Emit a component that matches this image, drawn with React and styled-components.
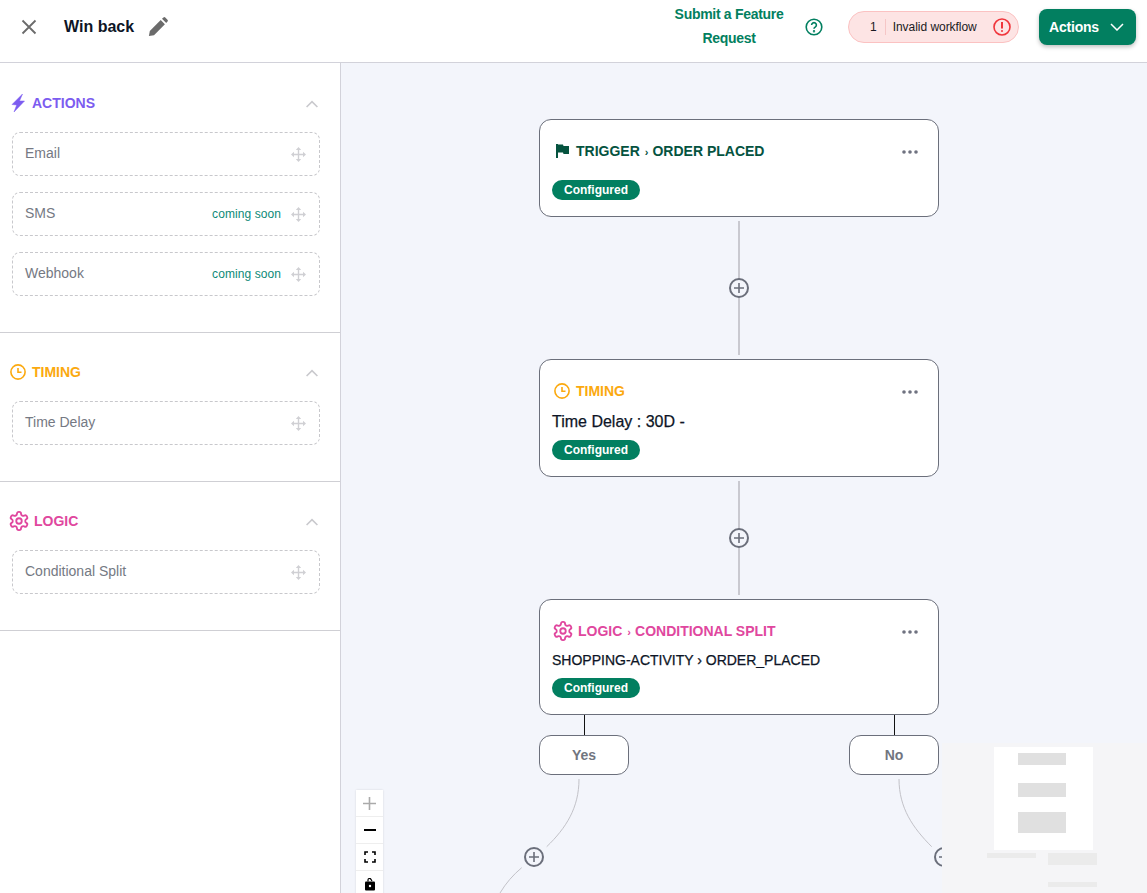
import React from "react";
import styled, { createGlobalStyle } from "styled-components";

const GREEN = "#027f60";

const Global = createGlobalStyle`
  html, body { margin: 0; padding: 0; height: 100%; overflow: hidden; background: #fff; }
  body { font-family: "Liberation Sans", Arial, sans-serif; }
  #root { height: 100%; }
  * { box-sizing: border-box; }
`;

const Page = styled.div`
  width: 1147px; height: 893px; display: flex; flex-direction: column; overflow: hidden;
`;
const Header = styled.header`
  height: 63px; flex: none; display: flex; align-items: center; background: #fff;
  border-bottom: 1px solid #d2d2da; padding: 0 11px 8px 20px;
`;
const CloseBtn = styled.button`
  width: 18px; height: 18px; padding: 0; border: 0; background: none; display: flex; color: #6b6b6b; margin-right: 26px;
`;
const Title = styled.h1`
  margin: 0 14px 0 0; font-size: 16px; font-weight: 700; color: #0d1526; line-height: 20px;
`;
const PencilWrap = styled.span` display: flex; color: #6b6b6b; `;
const Spacer = styled.div` flex: 1; `;
const FeatureLink = styled.a`
  width: 116px; text-align: center; font-size: 14px; font-weight: 700; line-height: 24px; color: ${GREEN}; letter-spacing: -.3px; margin: -2px 1px 0 -1px;
`;
const HelpIcon = styled.span` display: flex; margin: 0 25px 0 17px; color: ${GREEN}; `;
const ErrorPill = styled.div`
  width: 171px; height: 32px; display: flex; align-items: center; border-radius: 16px; background: #fde4e4; border: 1px solid #fbc2c2;
  font-size: 12px; color: #1a1a22; padding: 0 7px 0 21px; margin-right: 20px;
`;
const ErrorCount = styled.span` padding-right: 8px; border-right: 1px solid #f6c6c6; margin-right: 7px; line-height: 16px; `;
const ErrorText = styled.span` flex: 1; white-space: nowrap; letter-spacing: -.04px; `;
const ActionsBtn = styled.button`
  width: 97px; height: 36px; border: 0; border-radius: 8px; background: ${GREEN}; color: #fff; font: 700 14px "Liberation Sans", Arial, sans-serif;
  letter-spacing: -.2px; display: flex; align-items: center; justify-content: space-between; padding: 0 12px 0 10px; box-shadow: 0 2px 4px rgba(0,0,0,.25);
`;
const Body = styled.div` flex: 1; display: flex; min-height: 0; `;
const Sidebar = styled.aside`
  width: 341px; flex: none; background: #fff; border-right: 1px solid #d2d2da;
`;
const Section = styled.section`
  padding: 27px 22px 36px 10px; border-bottom: 1px solid #cfcfd4;
  &:first-child { padding-top: 28px; }
`;
const SectionHead = styled.div`
  height: 24px; display: flex; align-items: center; gap: ${p => p.$gap}px; color: ${p => p.$color}; font-size: 14px; font-weight: 700;
  margin-bottom: 17px;
`;
const SectionChevron = styled.span` margin-left: auto; display: flex; color: #c9c9cd; margin-top: 2px; `;
const ItemList = styled.div` display: flex; flex-direction: column; gap: 16px; margin: 0 -2px 0 2px; `;
const Item = styled.div`
  height: 44px; display: flex; align-items: center; border: 1px dashed #c8c8cc; border-radius: 8px; padding: 0 13px 3px 12px;
  font-size: 14px; color: #757983;
`;
const Soon = styled.span` margin-left: auto; font-size: 12px; color: #0d8a78; letter-spacing: .08px; margin-right: 10px; margin-top: 3px; `;
const Handle = styled.span` display: flex; color: #d0d0d4; margin-top: 3px; margin-left: ${p => (p.$auto ? "auto" : "0")}; `;
const Canvas = styled.main`
  position: relative; flex: 1; background: #f3f5fb; overflow: hidden;
`;
const Edges = styled.svg`
  position: absolute; left: 0; top: 0; width: 806px; height: 830px; pointer-events: none;
`;
const Node = styled.div`
  position: absolute; left: 198px; width: 400px; top: ${p => p.$top}px; height: ${p => p.$h}px; background: #fff;
  border: 1px solid #6b6f7b; border-radius: 12px; padding: 0 12px;
`;
const NodeHead = styled.div`
  position: absolute; left: ${p => p.$left ?? 14}px; top: 21px; height: 20px; display: flex; align-items: center; gap: ${p => p.$gap ?? 6}px;
  color: ${p => p.$color}; font-size: 14px; font-weight: 700; white-space: nowrap;
`;
const Sep = styled.span` font-size: 11px; margin: 0 4px 0 5px; `;
const Dots = styled.span` position: absolute; right: 20px; top: 30px; display: flex; color: #6f7280; `;
const NodeText = styled.div`
  position: absolute; left: 12px; top: ${p => p.$top}px; font-size: ${p => p.$size}px; font-weight: 500; color: #0d1526; line-height: 20px; white-space: nowrap;
  -webkit-text-stroke: .25px #0d1526;
`;
const Badge = styled.span`
  position: absolute; left: 12px; bottom: 16px; height: 20px; width: 88px; border-radius: 10px; background: ${GREEN}; color: #fff;
  font-size: 12px; font-weight: 700; display: flex; align-items: center; justify-content: center;
`;
const Branch = styled.div`
  position: absolute; top: 672px; left: ${p => p.$left}px; width: 90px; height: 40px; background: #fff; border: 1px solid #6b6f7b; border-radius: 12px;
  display: flex; align-items: center; justify-content: center; font-size: 14px; font-weight: 700; color: #71757f;
`;
const ZoomBar = styled.div`
  position: absolute; left: 15px; top: 727px; width: 27px; display: flex; flex-direction: column; background: #fff; box-shadow: 0 0 2px rgba(0,0,0,.12);
`;
const ZoomBtn = styled.div`
  width: 27px; height: 27px; flex: none; display: flex; align-items: center; justify-content: center; border-bottom: 1px solid #eee; color: ${p => p.$c || "#000"};
`;
const Minimap = styled.div`
  position: absolute; left: 601px; top: 680px; width: 205px; height: 150px; background: #f5f5f7;
`;
const MiniSheet = styled.div`
  position: absolute; left: 52px; top: 4px; width: 99px; height: 103px; background: #fff;
`;
const MiniBlock = styled.div`
  position: absolute; left: ${p => p.$x}px; top: ${p => p.$y}px; width: ${p => p.$w}px; height: ${p => p.$h}px; background: ${p => p.$c};
`;

const FlashIcon = () => (
  <svg width="15" height="18" viewBox="-2 0 15 18"><path d="M10.500 0 0 10.500l4.700.5L2 18 12.500 7 7.500 7z" fill="currentColor" stroke="currentColor" strokeWidth=".5" strokeLinejoin="round" /></svg>
);
const ClockIcon = () => (
  <svg width="16" height="16" viewBox="0 0 16 16" fill="none" stroke="currentColor" strokeWidth="1.600"><circle cx="8" cy="8" r="7.100" /><path d="M8 4v4.300h3.500" /></svg>
);
const GearIcon = () => (
  <svg width="22" height="22" viewBox="0 0 24 24" fill="none" stroke="currentColor" strokeWidth="2" strokeLinecap="round" strokeLinejoin="round" style={{ marginLeft: -2 }}>
    <path d="M12.220 2h-.44a2 2 0 0 0-2 2v.18a2 2 0 0 1-1 1.730l-.43.25a2 2 0 0 1-2 0l-.15-.08a2 2 0 0 0-2.730.73l-.22.38a2 2 0 0 0 .73 2.730l.15.1a2 2 0 0 1 1 1.720v.51a2 2 0 0 1-1 1.740l-.15.09a2 2 0 0 0-.73 2.730l.22.38a2 2 0 0 0 2.730.73l.15-.08a2 2 0 0 1 2 0l.43.25a2 2 0 0 1 1 1.730V20a2 2 0 0 0 2 2h.44a2 2 0 0 0 2-2v-.18a2 2 0 0 1 1-1.730l.43-.25a2 2 0 0 1 2 0l.15.08a2 2 0 0 0 2.730-.73l.22-.39a2 2 0 0 0-.73-2.730l-.15-.08a2 2 0 0 1-1-1.740v-.5a2 2 0 0 1 1-1.740l.15-.09a2 2 0 0 0 .73-2.730l-.22-.38a2 2 0 0 0-2.730-.73l-.15.08a2 2 0 0 1-2 0l-.43-.25a2 2 0 0 1-1-1.730V4a2 2 0 0 0-2-2z" />
    <circle cx="12" cy="12" r="3" />
  </svg>
);
const MoveIcon = () => (
  <svg width="15" height="15" viewBox="0 0 15 15" fill="currentColor">
    <path d="M6.800 2.500h1.400v10H6.800zM2.500 6.800h10v1.400h-10z" /><path d="M7.500 0 10.200 3H4.800zM7.500 15 4.800 12h5.400zM0 7.500 3 4.800v5.400zM15 7.500 12 10.200V4.800z" />
  </svg>
);
const Chevron = () => (
  <svg width="12" height="8" viewBox="0 0 12 8" fill="none" stroke="currentColor" strokeWidth="1.600"><path d="M.6 7l5.400-5.400L11.400 7" /></svg>
);
const DotsIcon = () => (
  <svg width="16" height="4" viewBox="0 0 16 4" fill="currentColor"><circle cx="2" cy="2" r="1.800" /><circle cx="8" cy="2" r="1.800" /><circle cx="14" cy="2" r="1.800" /></svg>
);
const AddCircle = ({ x, y }) => (
  <g transform={`translate(${x} ${y})`} fill="none" stroke="#6b6f7b">
    <circle r="9" strokeWidth="2" fill="#f3f5fb" />
    <path d="M-5 0h10M0-5v10" strokeWidth="1.600" />
  </g>
);

const Row = ({ label, soon }) => (
  <Item>
    {label}
    {soon && <Soon>coming soon</Soon>}
    <Handle $auto={!soon}><MoveIcon /></Handle>
  </Item>
);

const SidebarSection = ({ color, icon, gap, title, items }) => (
  <Section>
    <SectionHead $color={color} $gap={gap}>
      {icon}
      {title}
      <SectionChevron><Chevron /></SectionChevron>
    </SectionHead>
    <ItemList>
      {items.map(i => <Row key={i.label} {...i} />)}
    </ItemList>
  </Section>
);

export default function App() {
  return (
    <Page>
      <Global />
      <Header>
        <CloseBtn aria-label="Close">
          <svg width="18" height="18" viewBox="0 0 18 18" stroke="currentColor" strokeWidth="1.800"><path d="M2.500 2.500l13 13M15.500 2.500l-13 13" /></svg>
        </CloseBtn>
        <Title>Win back</Title>
        <PencilWrap>
          <svg width="20" height="20" viewBox="0 0 22 22" fill="currentColor"><path d="M1 21l1-5.600L14 3.400l4.600 4.600-12 12zM15.400 2l1.600-1.400a1.400 1.400 0 0 1 2 0l2.400 2.400a1.400 1.400 0 0 1 0 2L20 6.600z" /></svg>
        </PencilWrap>
        <Spacer />
        <FeatureLink>Submit a Feature Request</FeatureLink>
        <HelpIcon>
          <svg width="18" height="18" viewBox="0 0 18 18" fill="none" stroke="currentColor" strokeWidth="1.600"><circle cx="9" cy="9" r="7.800" /><path d="M6.600 7a2.400 2.400 0 1 1 3.600 2.100c-.8.5-1.200.9-1.200 1.700" /><circle cx="9" cy="13.200" r=".4" /></svg>
        </HelpIcon>
        <ErrorPill>
          <ErrorCount>1</ErrorCount>
          <ErrorText>Invalid workflow</ErrorText>
          <svg width="18" height="18" viewBox="0 0 18 18" fill="none" stroke="#f0353b" strokeWidth="1.600"><circle cx="9" cy="9" r="8" /><path d="M9 4v6.400M9 12.200v1.600" strokeWidth="2" /></svg>
        </ErrorPill>
        <ActionsBtn>
          Actions
          <svg width="14" height="8" viewBox="0 0 14 8" fill="none" stroke="#fff" strokeWidth="1.500"><path d="M1 1l6 6 6-6" /></svg>
        </ActionsBtn>
      </Header>
      <Body>
        <Sidebar>
          <SidebarSection color="#7c5cf0" gap={7} icon={<FlashIcon />} title="ACTIONS"
            items={[{ label: "Email" }, { label: "SMS", soon: true }, { label: "Webhook", soon: true }]} />
          <SidebarSection color="#fba90f" gap={6} icon={<ClockIcon />} title="TIMING"
            items={[{ label: "Time Delay" }]} />
          <SidebarSection color="#e0479e" gap={4} icon={<GearIcon />} title="LOGIC"
            items={[{ label: "Conditional Split" }]} />
        </Sidebar>
        <Canvas>
          <Edges viewBox="0 0 806 830" fill="none">
            <path d="M398 158V292M398 418V532" stroke="#c9c9d0" strokeWidth="2" />
            <path d="M243.500 652V672M553.500 652V672" stroke="#111" strokeWidth="1" />
            <path d="M238 716C238 745 225 765 205.700 783.700M180.700 804.700C172 812 165 820 159 830" stroke="#c2c2c8" strokeWidth="1" />
            <path d="M558 716C558 745 572 765 590.700 783.700" stroke="#c2c2c8" strokeWidth="1" />
            <AddCircle x={398} y={225} />
            <AddCircle x={398} y={475} />
            <AddCircle x={193} y={794} />
            <AddCircle x={603} y={794} />
          </Edges>
          <Node $top={56} $h={98}>
            <NodeHead $color="#05533f">
              <svg width="16" height="16" viewBox="0 0 16 16" fill="currentColor"><path d="M2 1h2v14H2zM4 1.500h5l.5 1.500H15v8H9.500l-.5-1.500H4z" /></svg>
              <span>TRIGGER<Sep>›</Sep>ORDER PLACED</span>
            </NodeHead>
            <Dots><DotsIcon /></Dots>
            <Badge>Configured</Badge>
          </Node>
          <Node $top={296} $h={118}>
            <NodeHead $color="#fba90f"><ClockIcon />TIMING</NodeHead>
            <Dots><DotsIcon /></Dots>
            <NodeText $top={52} $size={16}>Time Delay : 30D -</NodeText>
            <Badge>Configured</Badge>
          </Node>
          <Node $top={536} $h={116}>
            <NodeHead $color="#e0479e" $gap={4}><GearIcon /><span>LOGIC<Sep>›</Sep>CONDITIONAL SPLIT</span></NodeHead>
            <Dots><DotsIcon /></Dots>
            <NodeText $top={50} $size={14}>SHOPPING-ACTIVITY › ORDER_PLACED</NodeText>
            <Badge>Configured</Badge>
          </Node>
          <Branch $left={198}>Yes</Branch>
          <Branch $left={508}>No</Branch>
          <ZoomBar>
            <ZoomBtn $c="#aaa"><svg width="13" height="13" viewBox="0 0 13 13" fill="currentColor"><path d="M5.700 0h1.600v13H5.700zM0 5.700h13v1.600H0z" /></svg></ZoomBtn>
            <ZoomBtn><svg width="12" height="2" viewBox="0 0 12 2" fill="currentColor"><path d="M0 0h12v2H0z" /></svg></ZoomBtn>
            <ZoomBtn><svg width="12" height="12" viewBox="0 0 12 12" fill="none" stroke="currentColor" strokeWidth="1.600"><path d="M1 4V1h3M8 1h3v3M11 8v3H8M4 11H1V8" /></svg></ZoomBtn>
            <ZoomBtn><svg width="10" height="13" viewBox="0 0 10 13"><path d="M3 3.500V2a1.500 1.500 0 0 1 2.800-.8L7 3" fill="none" stroke="#000" strokeWidth="1.200" /><rect x="0" y="3.500" width="10" height="9" rx="1" /><circle cx="5" cy="8" r="1.200" fill="#fff" /></svg></ZoomBtn>
          </ZoomBar>
          <Minimap>
            <MiniSheet />
            <MiniBlock $x={76} $y={10} $w={48} $h={12} $c="#e0e0e0" />
            <MiniBlock $x={76} $y={40} $w={48} $h={14} $c="#e0e0e0" />
            <MiniBlock $x={76} $y={69} $w={48} $h={21} $c="#e0e0e0" />
            <MiniBlock $x={45} $y={110} $w={49} $h={5} $c="#ebebeb" />
            <MiniBlock $x={106} $y={110} $w={49} $h={12} $c="#ebebeb" />
            <MiniBlock $x={106} $y={139} $w={49} $h={5} $c="#ebebeb" />
          </Minimap>
        </Canvas>
      </Body>
    </Page>
  );
}
